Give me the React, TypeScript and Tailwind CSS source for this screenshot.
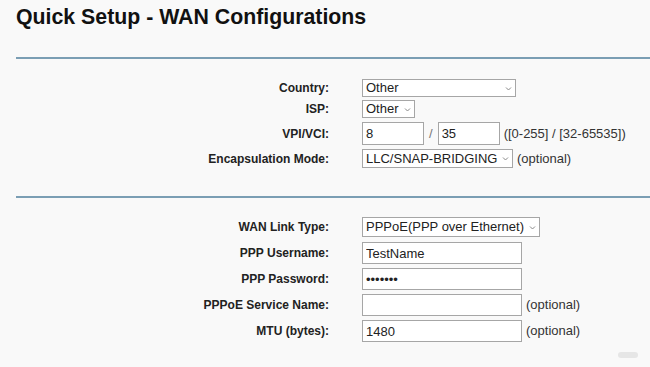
const label = "w-[329px] shrink-0 text-right text-[12px] font-bold text-[#222]";
const box = "h-full border border-[#a6a6a6] bg-white px-[3px] text-[13px] text-[#222] outline-none";
const note = "text-[13px] text-[#333]";

function Chevron() {
  return (
    <svg width="7" height="5" viewBox="0 0 7 5" className="shrink-0">
      <path d="M1 1.5l2.5 2.5 2.5-2.5" fill="none" stroke="#8a8a8a" strokeWidth="1" />
    </svg>
  );
}

function Select({ value, width }: { value: string; width: string }) {
  return (
    <div className={`flex h-full items-center justify-between border border-[#a6a6a6] bg-white pl-[3px] pr-[3px] text-[13px] text-[#222] ${width}`}>
      <span className="whitespace-nowrap">{value}</span>
      <Chevron />
    </div>
  );
}

function Row({ name, h, children }: { name: string; h: string; children: React.ReactNode }) {
  return (
    <div className={`flex items-center ${h}`}>
      <div className={label}>{name}</div>
      <div className="ml-[33px] flex h-full items-center gap-[4px]">{children}</div>
    </div>
  );
}

export default function App() {
  return (
    <div
      className="relative h-[367px] w-[650px] overflow-hidden bg-[#f9f9f9]"
      style={{ fontFamily: '"Liberation Sans", Arial, sans-serif' }}
    >
      <h1 className="pl-[16px] pt-[5px] text-[21.3px] font-bold leading-[24px] text-[#111]">
        Quick Setup - WAN Configurations
      </h1>

      <div className="ml-[16px] mt-[28px] h-[2px] bg-[#7b9eb4]" />

      {/* ATM settings */}
      <div className="flex flex-col pt-[20px]">
        <Row name="Country:" h="h-[18px]">
          <Select value="Other" width="w-[154px]" />
        </Row>
        <div className="mt-[3px]">
          <Row name="ISP:" h="h-[18px]">
            <Select value="Other" width="w-[53px]" />
          </Row>
        </div>
        <div className="mt-[4px]">
          <Row name="VPI/VCI:" h="h-[23px]">
            <input readOnly value="8" className={`${box} w-[62px]`} />
            <span className="mx-[1px] text-[13px] text-[#777]">/</span>
            <input readOnly value="35" className={`${box} w-[62px]`} />
            <span className={note}>([0-255] / [32-65535])</span>
          </Row>
        </div>
        <div className="mt-[4px]">
          <Row name="Encapsulation Mode:" h="h-[19px]">
            <Select value="LLC/SNAP-BRIDGING" width="w-[151px]" />
            <span className={note}>(optional)</span>
          </Row>
        </div>
      </div>

      <div className="ml-[16px] mt-[28px] h-[2px] bg-[#7b9eb4]" />

      {/* PPPoE settings */}
      <div className="flex flex-col pt-[19px]">
        <Row name="WAN Link Type:" h="h-[20px]">
          <Select value="PPPoE(PPP over Ethernet)" width="w-[178px]" />
        </Row>
        <div className="mt-[5px] flex flex-col gap-[4px]">
          <Row name="PPP Username:" h="h-[22px]">
            <input readOnly value="TestName" className={`${box} w-[160px]`} />
          </Row>
          <Row name="PPP Password:" h="h-[22px]">
            <input readOnly type="password" value="1234567" className={`${box} w-[160px] text-[8px]`} />
          </Row>
          <Row name="PPPoE Service Name:" h="h-[22px]">
            <input readOnly value="" className={`${box} w-[160px]`} />
            <span className={note}>(optional)</span>
          </Row>
          <Row name="MTU (bytes):" h="h-[22px]">
            <input readOnly value="1480" className={`${box} w-[160px]`} />
            <span className={note}>(optional)</span>
          </Row>
        </div>
      </div>

      <div className="absolute bottom-[9px] right-[12px] h-[6px] w-[20px] rounded-full bg-[#e6e6e6]" />
    </div>
  );
}
